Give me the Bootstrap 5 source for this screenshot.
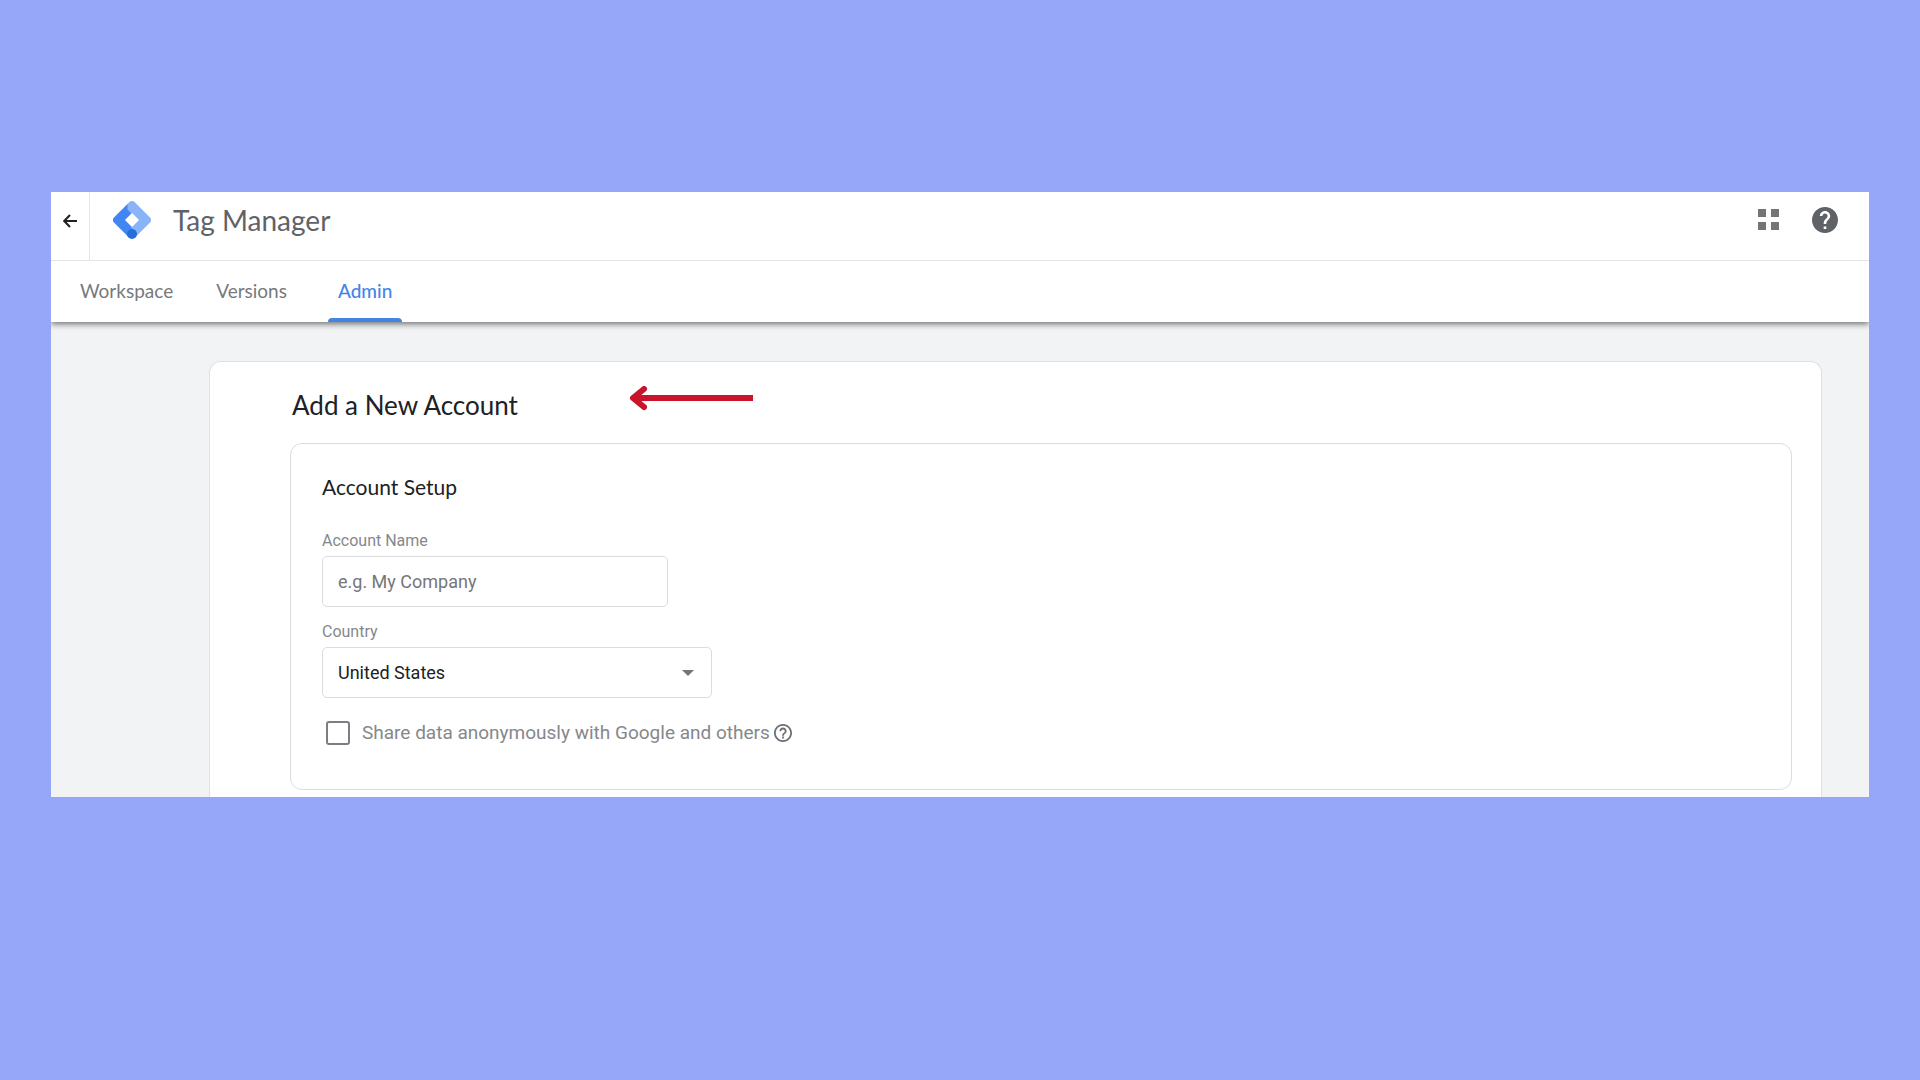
<!DOCTYPE html>
<html lang="en">
<head>
<meta charset="utf-8">
<meta name="viewport" content="width=device-width, initial-scale=1">
<title>Tag Manager</title>
<link href="https://cdn.jsdelivr.net/npm/bootstrap@5.3.0/dist/css/bootstrap.min.css" rel="stylesheet">
<style>
  body { background: #96a6f8; font-family: Roboto, "Liberation Sans", sans-serif; color: #202124; }
  .stage { padding: 192px 51px; }
  .app-window { background: #f1f3f4; }
  .app-head { background: #fff; box-shadow: 0 2px 6px rgba(0, 0, 0, .55); position: relative; }
  .icon-btn { padding: 0; border: 0; background: none; line-height: 0; }
  .title-bar { height: 69px; border-bottom: 1px solid #e3e4e6; }
  .back-btn { width: 39px; border-right: 1px solid #e3e4e6; padding-bottom: 10px; }
  .title-main { padding: 0 31px 12px 23px; }
  .brand-font { font-family: Lato, "Liberation Sans", sans-serif; }
  .product { font-size: 28px; line-height: 36px; color: #5f6368; margin-left: 22px; }
  .tabs { height: 61px; padding-left: 19px; gap: 23px; }
  .tabs a { font-size: 19px; line-height: 24px; color: #77797c; text-decoration: none; padding: 18px 10px 0; border-bottom: 4px solid transparent; }
  .tabs a.active { color: #4683e8; font-weight: 500; margin-left: 8px; }
  .tabs a.active::after { content: ""; position: absolute; left: 0; right: 0; bottom: -4px; height: 4px; background: #4683e1; border-radius: 4px 4px 0 0; }
  .workarea { padding: 39px 47px 0 158px; }
  .sheet { background: #fff; border: 1px solid #dfe1e4; border-bottom: 0; border-radius: 12px 12px 0 0; padding: 25px 29px 7px 80px; }
  .sheet h1 { font-size: 26px; line-height: 36px; margin: 0 0 20px 2px; }
  .pointer { left: 338px; top: -1px; }
  .setup { border: 1px solid #dadce0; border-radius: 12px; padding: 29px 31px 40px; }
  .setup h2 { font-size: 21px; line-height: 28px; margin: 0 0 30px; }
  .field-label { display: block; font-size: 16px; line-height: 20px; color: #85888b; margin-bottom: 5px; }
  .field-box { height: 51px; border: 1px solid #dadce0; border-radius: 5px; font-size: 18px; padding: 0 15px; color: #202124; }
  .field-box::placeholder { color: #757779; }
  .name-box { width: 346px; margin-bottom: 15px; }
  .country-box { width: 390px; background-size: 12px 6px; background-position: right 17px center;
    background-image: url("data:image/svg+xml,%3Csvg xmlns='http://www.w3.org/2000/svg' viewBox='0 0 12 6'%3E%3Cpath d='M0 0h12L6 6z' fill='%23757575'/%3E%3C/svg%3E"); }
  .share { margin: 20px 0 1px 4px; font-size: 19px; line-height: 30px; color: #85888b; }
  .share .form-check-input { width: 24px; height: 24px; margin: 0 12px 0 0; border: 2px solid #7b7e82; border-radius: 3px; }
</style>
</head>
<body>
<main class="stage">
  <div class="app-window overflow-hidden">
    <header class="app-head">
      <div class="title-bar d-flex">
        <button class="icon-btn back-btn d-flex align-items-center justify-content-center" type="button" aria-label="Back">
          <svg width="14" height="14" viewBox="0 0 14 14" fill="none" stroke="#202124" stroke-width="2"><path d="M14 7H1.500M7 1L1.200 7L7 13"/></svg>
        </button>
        <div class="title-main d-flex align-items-center flex-grow-1">
          <svg width="38" height="38" viewBox="0 0 38 38" aria-hidden="true">
            <path d="M14.500 3L1.200 16.200a4 4 0 0 0 0 5.600L15 35.600l9-4.600-11.500-12 10-10z" fill="#4285f4"/>
            <path d="M19 0a4 4 0 0 1 2.800 1.200l15 15a4 4 0 0 1 0 5.600L23.500 35 18 26l7-7-10.500-10.500 0-5.500 1.700-1.800A4 4 0 0 1 19 0z" fill="#8ab4f8"/>
            <circle cx="19" cy="33" r="5" fill="#246fdb"/>
            <path d="M19 12l7 7-7 7-7-7z" fill="#fff"/>
          </svg>
          <span class="product brand-font">Tag Manager</span>
          <button class="icon-btn ms-auto" type="button" aria-label="Apps">
            <svg width="22" height="22" viewBox="0 0 22 22" fill="#757575"><path d="M0 0h8v8H0zM13 0h8v8h-8zM0 13h8v8H0zM13 13h8v8h-8z"/></svg>
          </button>
          <button class="icon-btn ms-4 ps-2" type="button" aria-label="Help">
            <svg width="26" height="26" viewBox="2 2 20 20" fill="#5f6368"><path d="M12 2C6.480 2 2 6.480 2 12s4.480 10 10 10 10-4.480 10-10S17.520 2 12 2zm1 17h-2v-2h2v2zm2.070-7.750l-.9.920C13.450 12.900 13 13.500 13 15h-2v-.5c0-1.100.45-2.100 1.170-2.830l1.240-1.260c.37-.36.59-.86.59-1.410 0-1.100-.9-2-2-2s-2 .9-2 2H8c0-2.210 1.790-4 4-4s4 1.790 4 4c0 .88-.36 1.680-.93 2.250z"/></svg>
          </button>
        </div>
      </div>
      <nav class="tabs brand-font d-flex" aria-label="Sections">
        <a href="#">Workspace</a>
        <a href="#">Versions</a>
        <a href="#" class="active position-relative" aria-current="page">Admin</a>
      </nav>
    </header>
    <div class="workarea">
      <section class="sheet">
        <div class="position-relative">
          <h1 class="brand-font fw-normal">Add a New Account</h1>
          <svg class="pointer position-absolute" width="126" height="26" viewBox="0 0 126 26" fill="none" stroke="#c9152c" stroke-width="6" aria-hidden="true"><path d="M4 12H125"/><path d="M16 3L5 12L16 21" stroke-linecap="round" stroke-linejoin="round"/></svg>
        </div>
        <form class="setup">
          <h2 class="brand-font fw-normal">Account Setup</h2>
          <label class="field-label" for="accountName">Account Name</label>
          <input class="form-control field-box name-box" id="accountName" type="text" placeholder="e.g. My Company">
          <label class="field-label" for="country">Country</label>
          <select class="form-select field-box country-box" id="country"><option>United States</option></select>
          <div class="share d-flex align-items-center">
            <input class="form-check-input flex-shrink-0" type="checkbox" id="shareData">
            <label for="shareData">Share data anonymously with Google and others</label>
            <button class="icon-btn ms-1" type="button" aria-label="About data sharing">
              <svg width="18" height="18" viewBox="2 2 20 20" fill="#6b6e72"><path d="M11 18h2v-2h-2v2zm1-16C6.480 2 2 6.480 2 12s4.480 10 10 10 10-4.480 10-10S17.520 2 12 2zm0 18c-4.410 0-8-3.590-8-8s3.590-8 8-8 8 3.590 8 8-3.590 8-8 8zm0-14c-2.210 0-4 1.790-4 4h2c0-1.100.9-2 2-2s2 .9 2 2c0 2-3 1.750-3 5h2c0-2.250 3-2.500 3-5 0-2.210-1.790-4-4-4z"/></svg>
            </button>
          </div>
        </form>
      </section>
    </div>
  </div>
</main>
<script src="https://cdn.jsdelivr.net/npm/bootstrap@5.3.0/dist/js/bootstrap.bundle.min.js"></script>
</body>
</html>
